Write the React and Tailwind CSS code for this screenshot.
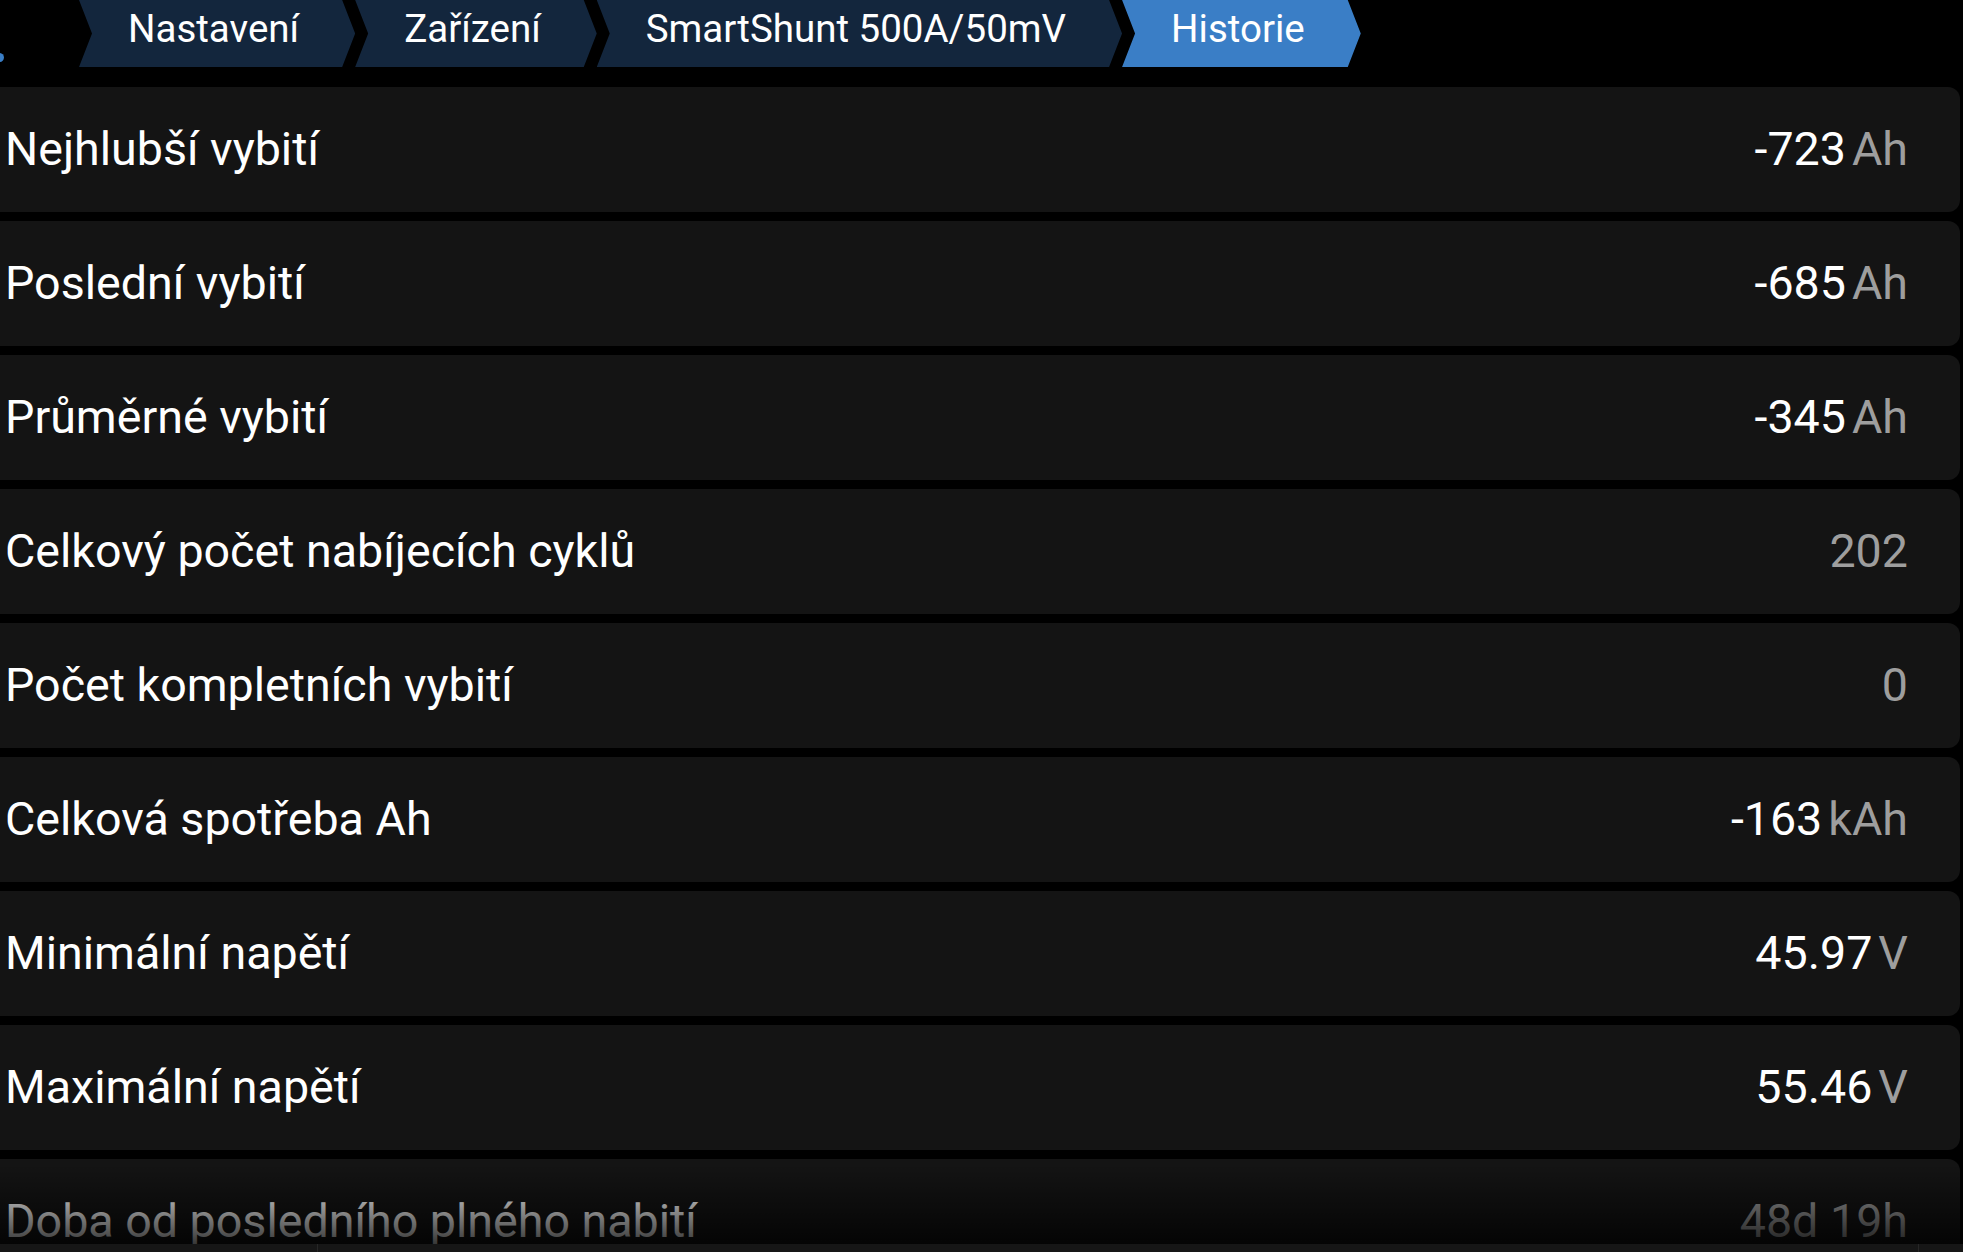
import React from "react";

const crumbs = [
  { label: "Nastavení", active: false },
  { label: "Zařízení", active: false },
  { label: "SmartShunt 500A/50mV", active: false },
  { label: "Historie", active: true },
];

const rows = [
  { label: "Nejhlubší vybití", value: "-723", unit: "Ah" },
  { label: "Poslední vybití", value: "-685", unit: "Ah" },
  { label: "Průměrné vybití", value: "-345", unit: "Ah" },
  { label: "Celkový počet nabíjecích cyklů", value: "202", unit: null, dim: true },
  { label: "Počet kompletních vybití", value: "0", unit: null, dim: true },
  { label: "Celková spotřeba Ah", value: "-163", unit: "kAh" },
  { label: "Minimální napětí", value: "45.97", unit: "V" },
  { label: "Maximální napětí", value: "55.46", unit: "V" },
  { label: "Doba od posledního plného nabití", value: "48d 19h", unit: null, dim: true },
];

export default function App() {
  return (
    <div
      className="relative h-[1252px] w-[1963px] overflow-hidden bg-black text-white"
      style={{ fontFamily: "Roboto, 'Noto Sans', sans-serif" }}
    >
      {/* Breadcrumb */}
      <div className="flex h-[67px] items-stretch">
        <div className="relative w-[79px] shrink-0">
          <span className="absolute left-[-5px] top-[53px] h-[9px] w-[9px] rounded-full bg-[#3a7ec6]" />
        </div>
        {crumbs.map((c) => (
          <div
            key={c.label}
            className={
              "flex shrink-0 items-start pl-[49px] pr-[56px] pt-0 text-[38.5px] leading-normal whitespace-nowrap [clip-path:polygon(0_0,calc(100%-13px)_0,100%_50%,calc(100%-13px)_100%,0_100%,13px_50%)] " +
              (c.active ? "bg-[#3a7ec6] text-white" : "bg-[#13263d] text-white")
            }
          >
            {c.label}
          </div>
        ))}
      </div>

      {/* Rows */}
      <div className="ml-[-12px] mr-[3px] mt-[20px] flex flex-col gap-[9px]">
        {rows.map((r) => (
          <div
            key={r.label}
            className="flex h-[125px] shrink-0 items-center justify-between rounded-[12px] bg-[#141414] pl-[17px] pr-[52px]"
          >
            <span className="text-[46.6px] leading-none text-white whitespace-nowrap">{r.label}</span>
            <span className="flex items-baseline text-[46.6px] leading-none whitespace-nowrap">
              <span className={r.dim ? "text-[#9e9e9e]" : "text-white"}>{r.value}</span>
              {r.unit && <span className="ml-[6px] text-[#9e9e9e]">{r.unit}</span>}
            </span>
          </div>
        ))}
      </div>

      {/* Bottom fade overlay */}
      <div className="pointer-events-none absolute bottom-[8px] left-0 right-0 h-[80px] bg-gradient-to-b from-transparent to-[rgba(0,0,0,0.78)]" />

      {/* Bottom bar edge */}
      <div className="absolute bottom-0 left-0 right-0 flex h-[8px] bg-[#161616]">
        <div className="w-[318px] border-r border-[#262626]" />
        <div className="w-[1601px] border-r border-[#262626]" />
        <div className="flex-1" />
      </div>
    </div>
  );
}
